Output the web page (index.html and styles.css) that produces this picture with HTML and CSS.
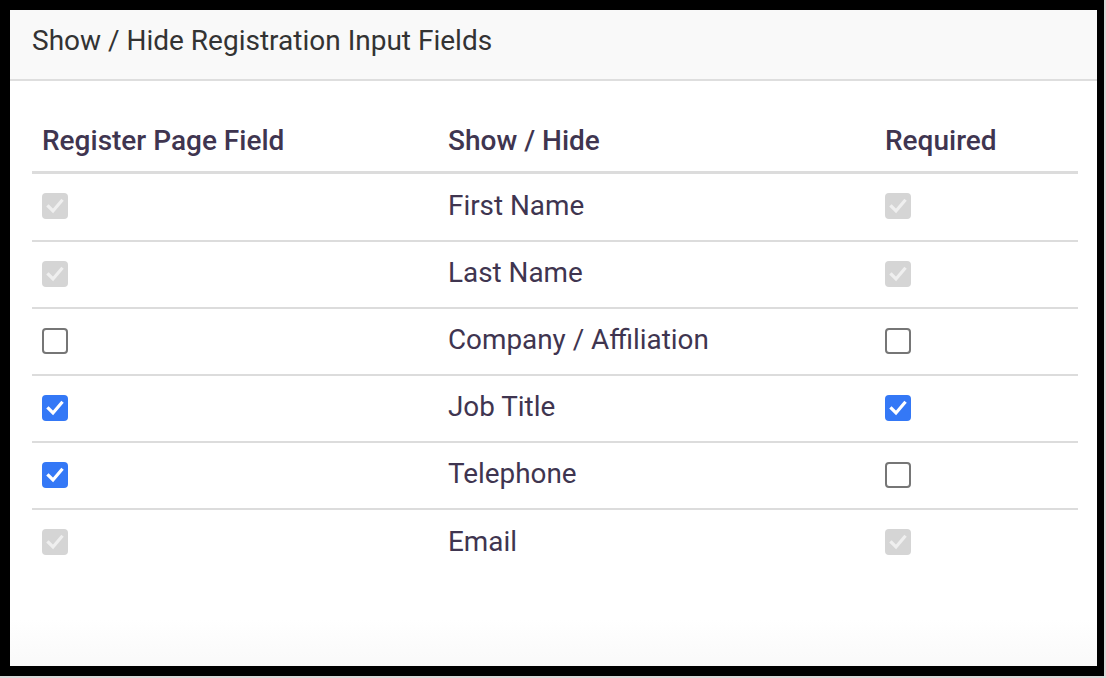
FILE: index.html
```html
<!DOCTYPE html>
<html>
<head>
<meta charset="utf-8">
<link rel="stylesheet" href="styles.css">
</head>
<body>
<div class="frame">
  <div class="panel">
    <div class="panel-head">Show / Hide Registration Input Fields</div>
    <div class="panel-body">
      <table class="fields">
        <thead>
          <tr><th class="c1">Register Page Field</th><th class="c2">Show / Hide</th><th class="c3">Required</th></tr>
        </thead>
        <tbody>
          <tr><td><span class="cb disabled"><svg viewBox="0 0 26 26"><path d="M6.5 13.5 L11 18 L19.5 8" /></svg></span></td><td>First Name</td><td><span class="cb disabled"><svg viewBox="0 0 26 26"><path d="M6.5 13.5 L11 18 L19.5 8" /></svg></span></td></tr>
          <tr><td><span class="cb disabled"><svg viewBox="0 0 26 26"><path d="M6.5 13.5 L11 18 L19.5 8" /></svg></span></td><td>Last Name</td><td><span class="cb disabled"><svg viewBox="0 0 26 26"><path d="M6.5 13.5 L11 18 L19.5 8" /></svg></span></td></tr>
          <tr><td><span class="cb empty"></span></td><td>Company / Affiliation</td><td><span class="cb empty"></span></td></tr>
          <tr><td><span class="cb checked"><svg viewBox="0 0 26 26"><path d="M6.5 13.5 L11 18 L19.5 8" /></svg></span></td><td>Job Title</td><td><span class="cb checked"><svg viewBox="0 0 26 26"><path d="M6.5 13.5 L11 18 L19.5 8" /></svg></span></td></tr>
          <tr><td><span class="cb checked"><svg viewBox="0 0 26 26"><path d="M6.5 13.5 L11 18 L19.5 8" /></svg></span></td><td>Telephone</td><td><span class="cb empty"></span></td></tr>
          <tr><td><span class="cb disabled"><svg viewBox="0 0 26 26"><path d="M6.5 13.5 L11 18 L19.5 8" /></svg></span></td><td>Email</td><td><span class="cb disabled"><svg viewBox="0 0 26 26"><path d="M6.5 13.5 L11 18 L19.5 8" /></svg></span></td></tr>
        </tbody>
      </table>
    </div>
  </div>
</div>
</body>
</html>
```

FILE: styles.css
```css
html, body {
  margin: 0;
  padding: 0;
}
body {
  background: #d8d8d8;
  width: 1106px;
  height: 678px;
  overflow: hidden;
  font-family: Roboto, "Liberation Sans", sans-serif;
}
.frame {
  width: 1087px;
  height: 656px;
  border-style: solid;
  border-color: #000;
  border-width: 10px 7px 10px 10px;
  background: #000;
}
.panel {
  height: 656px;
  background: linear-gradient(to bottom, #fff 0, #fff 610px, #f9f9f9 656px);
  display: flex;
  flex-direction: column;
}
.panel-head {
  height: 71px;
  flex: none;
  box-sizing: border-box;
  padding-left: 22px;
  display: flex;
  align-items: center;
  background: #f9f9f9;
  border-bottom: 2px solid #dedede;
  font-size: 28px;
  color: #333;
  padding-bottom: 9px;
}
.panel-body {
  padding: 29px 19px 0 22px;
}
.fields {
  width: 1046px;
  border-collapse: collapse;
  color: #3f3550;
}
.fields th {
  text-align: left;
  font-weight: 500;
  font-size: 28px;
  height: 61px;
  padding: 0 0 0 10px;
  border-bottom: 3px solid #dcdcdc;
  vertical-align: middle;
}
.fields th.c1 { width: 396px; }
.fields th.c2 { width: 427px; }
.fields td {
  font-size: 27.85px;
  height: 67px;
  box-sizing: border-box;
  padding: 0 0 3px 10px;
  border-bottom: 2px solid #dcdcdc;
  vertical-align: middle;
}
.fields tbody tr:first-child td { height: 68px; }
.fields tbody tr:last-child td { border-bottom: none; }
.cb {
  display: block;
  width: 26px;
  height: 26px;
  box-sizing: border-box;
  border-radius: 4px;
  margin-top: 2px;
}
.cb svg {
  display: block;
  width: 26px;
  height: 26px;
}
.cb svg path {
  fill: none;
  stroke-width: 3.2;
  stroke-linecap: square;
  stroke-linejoin: miter;
}
.cb.disabled {
  background: #d5d5d5;
}
.cb.disabled svg path { stroke: #efefef; }
.cb.checked {
  background: #3478f6;
}
.cb.checked svg path { stroke: #fff; }
.cb.empty {
  border: 2px solid #767676;
  background: #fff;
}
```
